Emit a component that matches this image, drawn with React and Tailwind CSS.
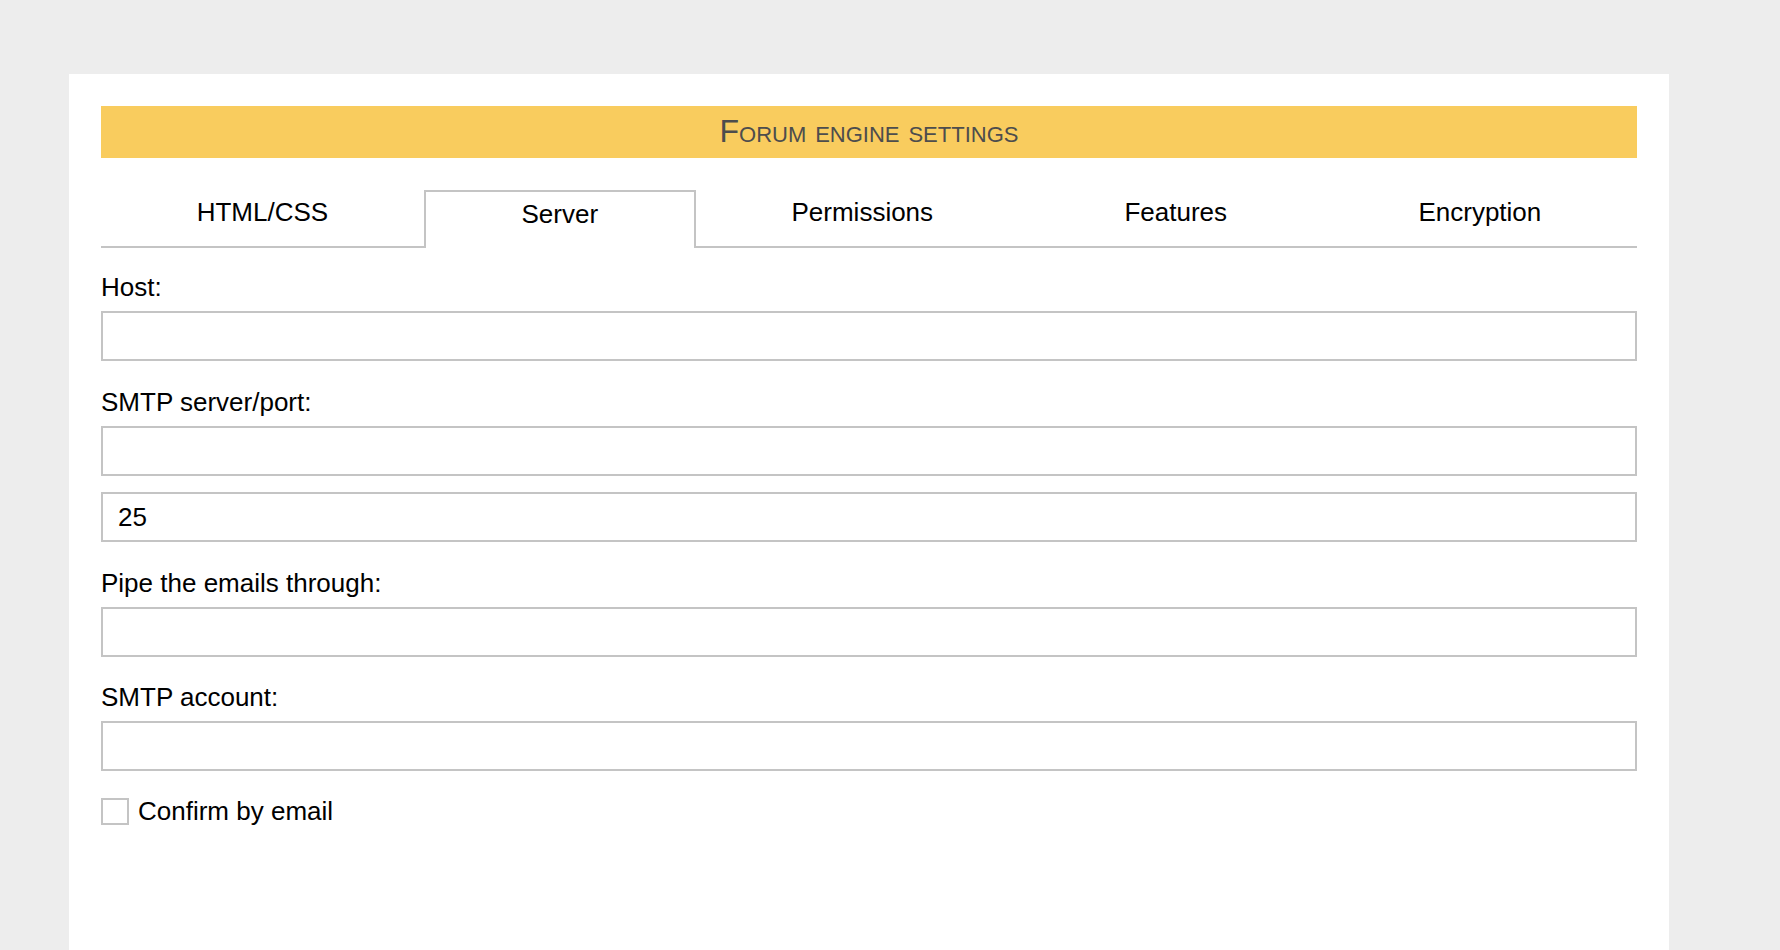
import { useState } from "react";

const tabs = ["HTML/CSS", "Server", "Permissions", "Features", "Encryption"];

const Field = ({ label, gap = "mt-[26px]", children }) => (
  <>
    <label className={`block text-[26px] leading-[30px] text-black ${gap}`}>
      {label}
    </label>
    {children}
  </>
);

const Input = ({ value, className = "" }) => (
  <input
    type="text"
    defaultValue={value}
    className={`block w-full h-[50px] border-2 border-[#c4c4c4] bg-white px-[15px] text-[26px] text-black outline-none ${className}`}
  />
);

const App = () => {
  const [active, setActive] = useState(1);
  const [confirm, setConfirm] = useState(false);

  return (
    <div className="min-h-screen bg-[#ededed] pl-[69px] pt-[74px] font-['Liberation_Sans',Arial,sans-serif] overflow-hidden">
      <div className="w-[1600px] h-[876px] bg-white p-8">
        <div className="h-[52px] bg-[#f9cc5e] flex items-center justify-center pb-[2px]">
          <h1 className="text-[32px] leading-none text-[#4d4d4d] [font-variant:small-caps]">
            Forum engine settings
          </h1>
        </div>

        <div className="mt-8 flex border-b-2 border-[#c4c4c4]">
          {tabs.map((t, i) => (
            <button
              key={t}
              type="button"
              onClick={() => setActive(i)}
              className={
                i === active
                  ? "flex-auto text-center text-[26px] leading-[30px] text-black pt-[6px] pb-[18px] px-[2px] border-2 border-b-0 border-[#c4c4c4] bg-white -mb-[2px] relative"
                  : "flex-auto text-center text-[26px] leading-[30px] text-black pt-[5px] pb-[19px] border-2 border-transparent border-b-0"
              }
            >
              {t}
            </button>
          ))}
        </div>

        <Field label="Host:" gap="mt-[24px]">
          <Input className="mt-[9px]" />
        </Field>

        <Field label="SMTP server/port:">
          <Input className="mt-[9px]" />
          <Input className="mt-4" value="25" />
        </Field>

        <Field label="Pipe the emails through:">
          <Input className="mt-[9px]" />
        </Field>

        <Field label="SMTP account:" gap="mt-[25px]">
          <Input className="mt-[9px]" />
        </Field>

        <label className="mt-[25px] flex items-center gap-[9px] text-[26px] leading-[30px] text-black cursor-pointer">
          <span
            onClick={() => setConfirm(!confirm)}
            className="w-[28px] h-[27px] border-2 border-[#c4c4c4] bg-white flex items-center justify-center text-[20px]"
          >
            {confirm ? "✓" : ""}
          </span>
          Confirm by email
        </label>
      </div>
    </div>
  );
};

export default App;
